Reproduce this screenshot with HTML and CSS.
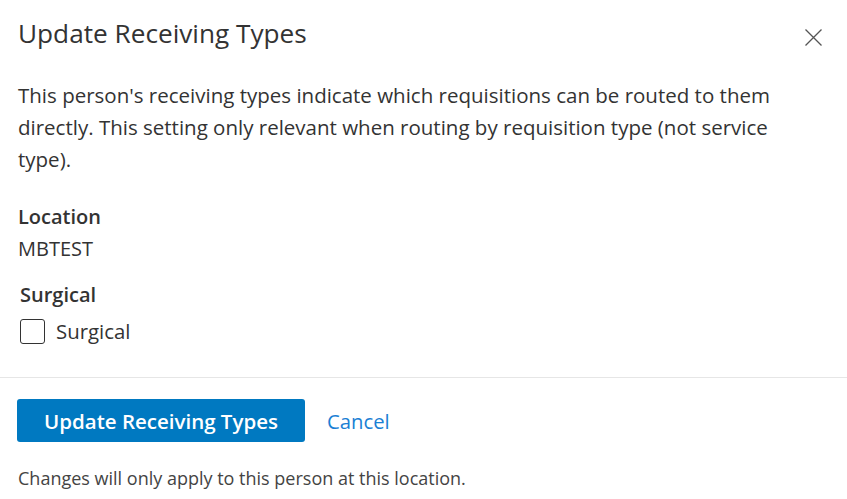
FILE: index.html
```html
<!DOCTYPE html>
<html lang="en">
<head>
    <meta charset="UTF-8">
    <meta name="viewport" content="width=device-width, initial-scale=1.0">
    <title>Update Receiving Types</title>
    <link rel="stylesheet" href="styles.css">
</head>
<body>
    <div class="modal">
        <div class="modal-header">
            <h2 class="modal-title">Update Receiving Types</h2>
            <button class="modal-close" aria-label="Close">
                <svg width="17" height="17" viewBox="0 0 17 17">
                    <path d="M0.5 0.5 L16.5 16.5 M16.5 0.5 L0.5 16.5" stroke="#555" stroke-width="1.3" fill="none"/>
                </svg>
            </button>
        </div>

        <div class="modal-body">
            <p class="modal-text">This person's receiving types indicate which requisitions can be routed to them directly. This setting only relevant when routing by requisition type (not service type).</p>

            <div class="field">
                <div class="field-label">Location</div>
                <div class="field-value">MBTEST</div>
            </div>

            <fieldset class="type-group">
                <legend class="field-label">Surgical</legend>
                <label class="check">
                    <input type="checkbox" class="check-input">
                    <span class="check-box"></span>
                    <span class="check-text">Surgical</span>
                </label>
            </fieldset>
        </div>

        <div class="modal-footer">
            <div class="modal-actions">
                <button class="primary-button">Update Receiving Types</button>
                <a href="#" class="cancel-link">Cancel</a>
            </div>
            <p class="footer-note">Changes will only apply to this person at this location.</p>
        </div>
    </div>
</body>
</html>
```

FILE: styles.css
```css
body, html {
    margin: 0;
    padding: 0;
    background: white;
    font-family: "Open Sans", "Noto Sans", sans-serif;
    color: #333;
}
.modal {
    width: 847px;
    height: 499px;
    overflow: hidden;
}
.modal-header {
    display: flex;
    justify-content: space-between;
    align-items: flex-start;
    padding: 16px 25px 0 18px;
}
.modal-title {
    margin: 0;
    font-size: 26.2px;
    font-weight: 500;
    line-height: 34px;
    color: #333;
}
.modal-close {
    margin-top: 13px;
    padding: 0;
    border: none;
    background: none;
    cursor: pointer;
    line-height: 0;
}
.modal-body {
    padding: 0 18px;
}
.modal-text {
    max-width: 790px;
    margin: 29px 0 0 0;
    font-size: 20.5px;
    line-height: 32px;
}
.field {
    margin-top: 26px;
}
.field-label {
    font-size: 20px;
    font-weight: 600;
    line-height: 32px;
    color: #333;
}
.field-value {
    font-size: 20px;
    line-height: 32px;
}
.type-group {
    margin: 14px 0 0 0;
    padding: 0 0 0 2px;
    border: none;
}
.type-group legend {
    padding: 0;
}
.check {
    display: flex;
    align-items: center;
    gap: 11px;
    margin-top: 7px;
    cursor: pointer;
}
.check-input {
    display: none;
}
.check-box {
    width: 23px;
    height: 23px;
    border: 1.5px solid #333;
    border-radius: 3px;
}
.check-text {
    font-size: 20.4px;
    line-height: 26px;
}
.modal-footer {
    margin-top: 33px;
    border-top: 1px solid #e6e6e6;
    padding: 21px 17px 0 17px;
}
.modal-actions {
    display: flex;
    align-items: center;
    gap: 22px;
}
.primary-button {
    height: 43px;
    padding: 0 27px;
    background: #0079c1;
    color: white;
    border: none;
    border-radius: 3px;
    font-family: inherit;
    font-size: 20.5px;
    font-weight: 600;
    cursor: pointer;
}
.cancel-link {
    color: #1a80d4;
    font-size: 20.3px;
    text-decoration: none;
}
.footer-note {
    margin: 24px 0 0 1px;
    font-size: 18px;
    color: #444;
}
```
